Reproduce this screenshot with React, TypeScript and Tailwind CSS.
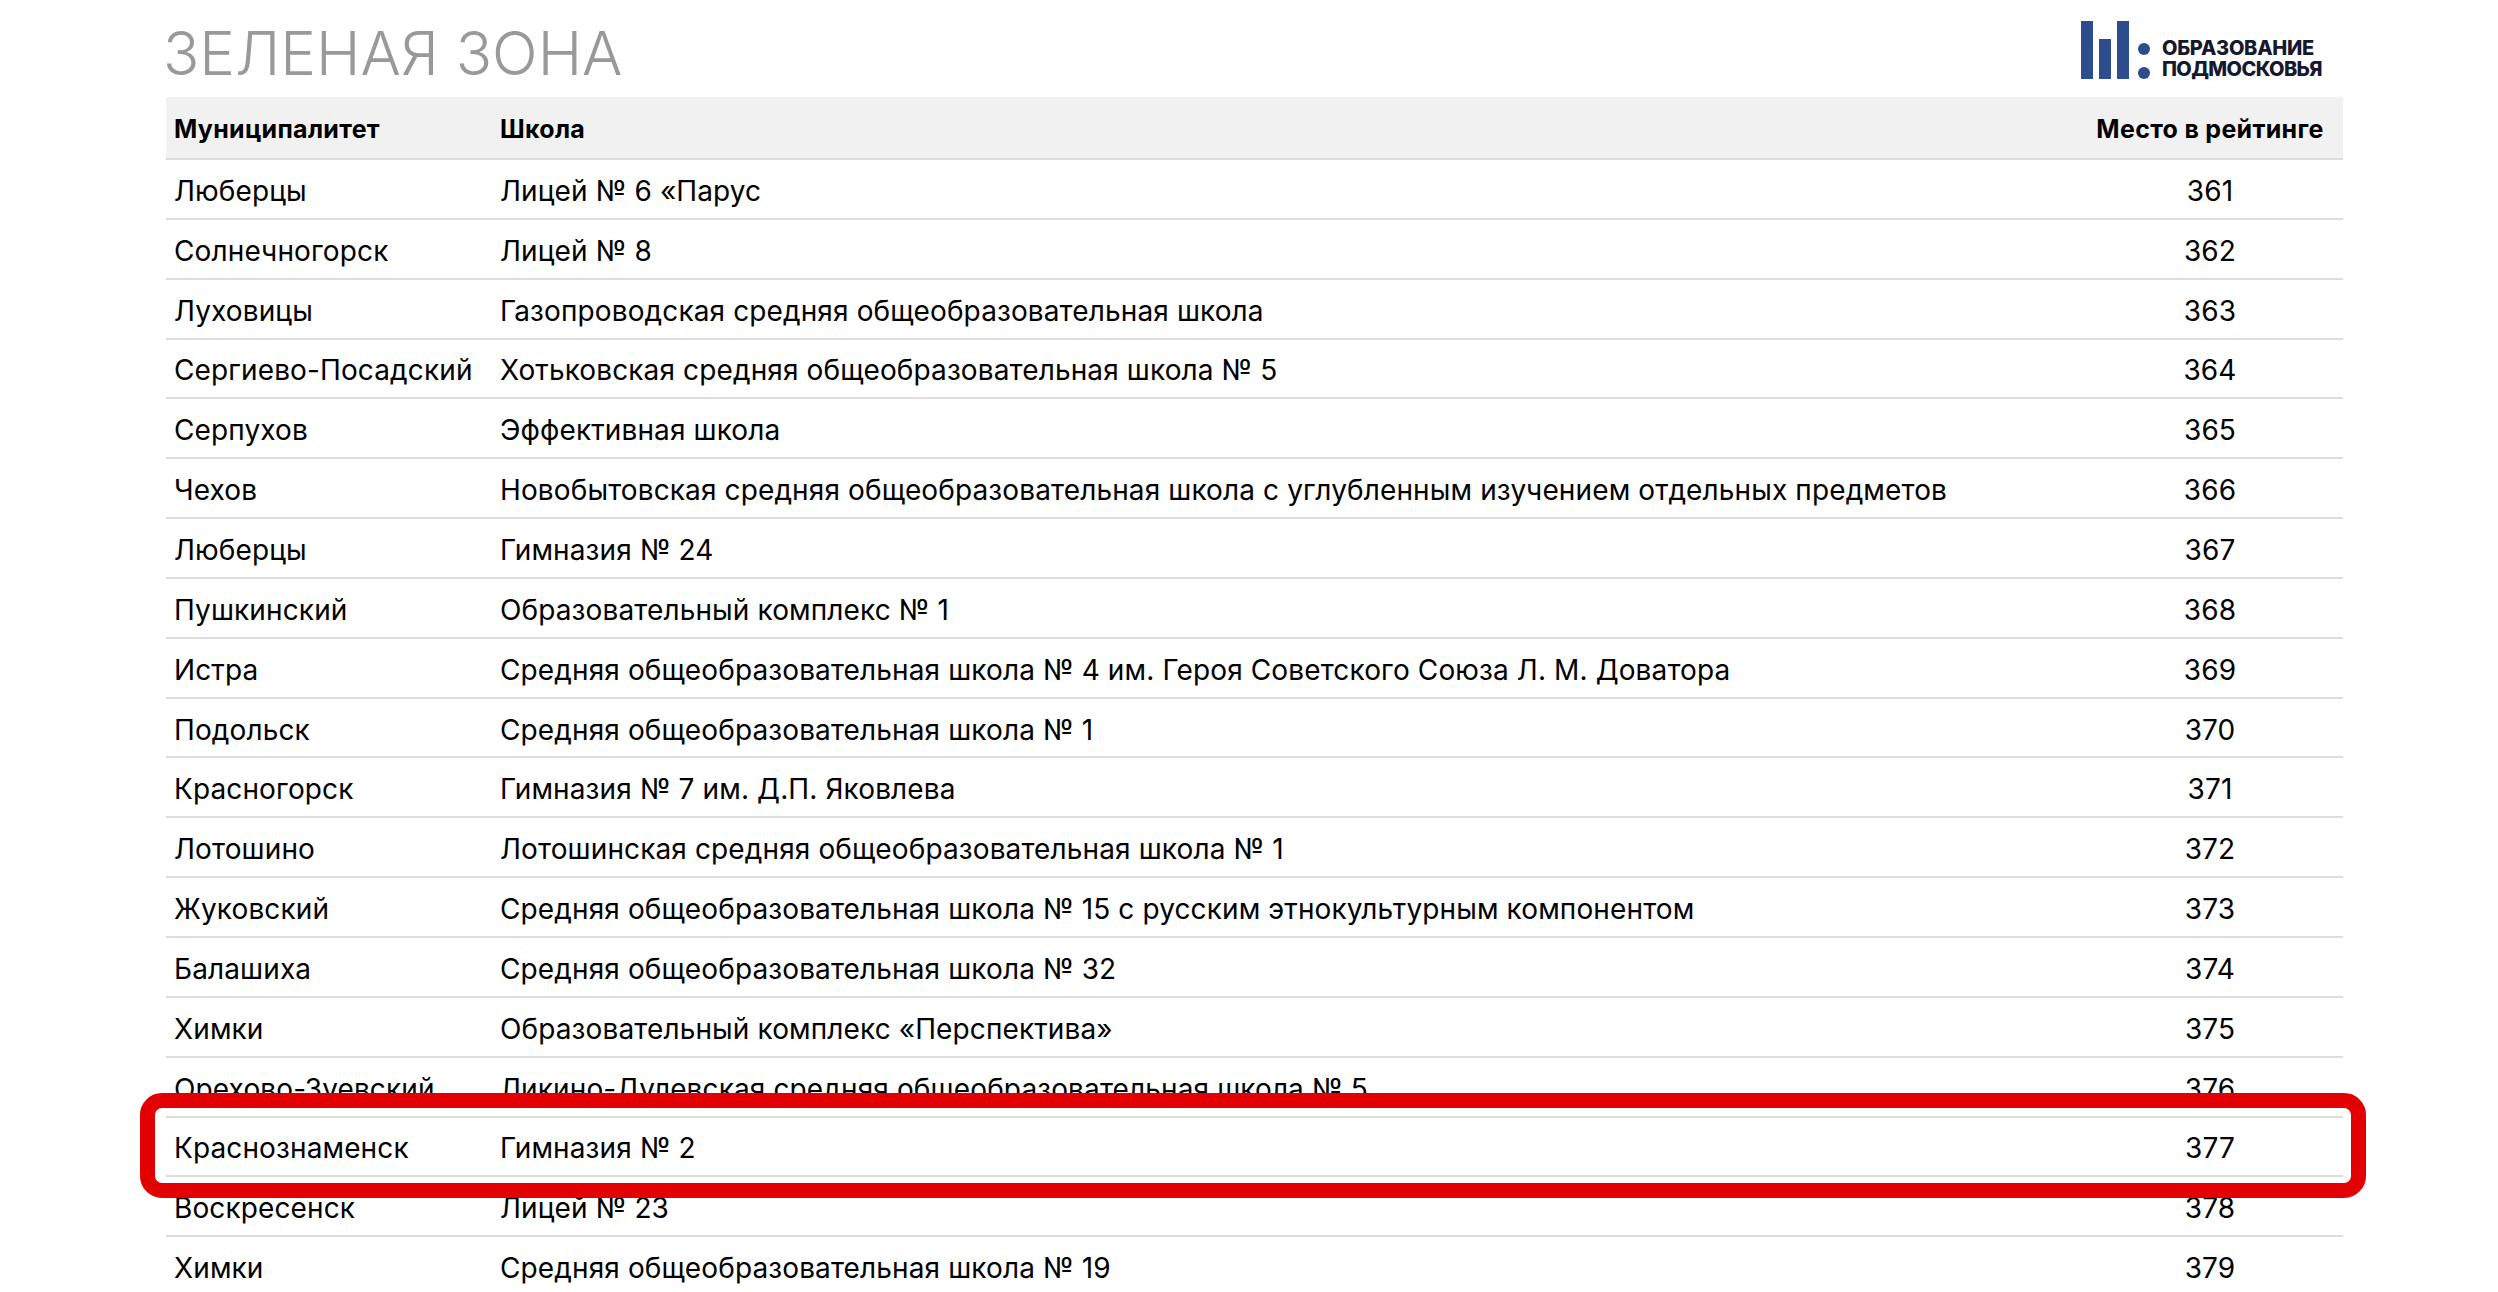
import React from 'react';

// Rating table rows
const rows = [
  { city: 'Люберцы', school: 'Лицей № 6 «Парус', place: 361 },
  { city: 'Солнечногорск', school: 'Лицей № 8', place: 362 },
  { city: 'Луховицы', school: 'Газопроводская средняя общеобразовательная школа', place: 363 },
  { city: 'Сергиево-Посадский', school: 'Хотьковская средняя общеобразовательная школа № 5', place: 364 },
  { city: 'Серпухов', school: 'Эффективная школа', place: 365 },
  { city: 'Чехов', school: 'Новобытовская средняя общеобразовательная школа с углубленным изучением отдельных предметов', place: 366 },
  { city: 'Люберцы', school: 'Гимназия № 24', place: 367 },
  { city: 'Пушкинский', school: 'Образовательный комплекс № 1', place: 368 },
  { city: 'Истра', school: 'Средняя общеобразовательная школа № 4 им. Героя Советского Союза Л. М. Доватора', place: 369 },
  { city: 'Подольск', school: 'Средняя общеобразовательная школа № 1', place: 370 },
  { city: 'Красногорск', school: 'Гимназия № 7 им. Д.П. Яковлева', place: 371 },
  { city: 'Лотошино', school: 'Лотошинская средняя общеобразовательная школа № 1', place: 372 },
  { city: 'Жуковский', school: 'Средняя общеобразовательная школа № 15 с русским этнокультурным компонентом', place: 373 },
  { city: 'Балашиха', school: 'Средняя общеобразовательная школа № 32', place: 374 },
  { city: 'Химки', school: 'Образовательный комплекс «Перспектива»', place: 375 },
  { city: 'Орехово-Зуевский', school: 'Ликино-Дулевская средняя общеобразовательная школа № 5', place: 376 },
  { city: 'Краснознаменск', school: 'Гимназия № 2', place: 377 },
  { city: 'Воскресенск', school: 'Лицей № 23', place: 378 },
  { city: 'Химки', school: 'Средняя общеобразовательная школа № 19', place: 379 },
];

const Logo: React.FC = () => (
  <div className="flex items-end gap-[12px]">
    <svg width="69" height="58" viewBox="0 0 69 58" className="block">
      <rect x="0" y="0" width="12" height="58" fill="#2d4d8f" />
      <rect x="18" y="18" width="12" height="40" fill="#2d4d8f" />
      <rect x="36" y="0" width="12" height="58" fill="#2d4d8f" />
      <circle cx="63" cy="28" r="6" fill="#2d4d8f" />
      <circle cx="63" cy="52" r="6" fill="#2d4d8f" />
    </svg>
    <div className="text-[#15192e] font-extrabold text-[20px] leading-[21px] -mb-[1px]">
      <div className="tracking-[-0.25px]">ОБРАЗОВАНИЕ</div>
      <div className="tracking-[-0.6px]">ПОДМОСКОВЬЯ</div>
    </div>
  </div>
);

export default function App() {
  return (
    <div className="relative h-[1292px] overflow-hidden bg-white pl-[166px] pr-[155px] text-black font-['Inter',sans-serif]">
      <div className="flex h-[97px] items-end justify-between">
        <h1 className="-ml-[3px] pb-[8px] text-[60px] font-light leading-[72px] text-[#999999]">ЗЕЛЕНАЯ ЗОНА</h1>
        <div className="pb-[18px] pr-[21px]">
          <Logo />
        </div>
      </div>

      <div className="flex h-[63px] items-center border-b-2 border-[#dddddd] bg-[#f1f1f1] pt-[5px] text-[25px] font-bold tracking-[0.3px]">
        <div className="w-[334px] pl-2">Муниципалитет</div>
        <div className="flex-1">Школа</div>
        <div className="w-[266px] text-center">Место в рейтинге</div>
      </div>

      {rows.map((row) => (
        <div key={row.place} className="flex h-[59.85px] items-center border-b-2 border-[#dddddd] pt-[4px] text-[28px] font-normal tracking-[0.12px]">
          <div className="w-[334px] whitespace-nowrap pl-2">{row.city}</div>
          <div className="flex-1 whitespace-nowrap">{row.school}</div>
          <div className="w-[266px] text-center">{row.place}</div>
        </div>
      ))}

      {/* Red highlight around row 377 */}
      <div className="absolute left-[140px] top-[1093px] h-[105px] w-[2226px] rounded-[22px] border-[15px] border-[#e30000]" />
    </div>
  );
}
